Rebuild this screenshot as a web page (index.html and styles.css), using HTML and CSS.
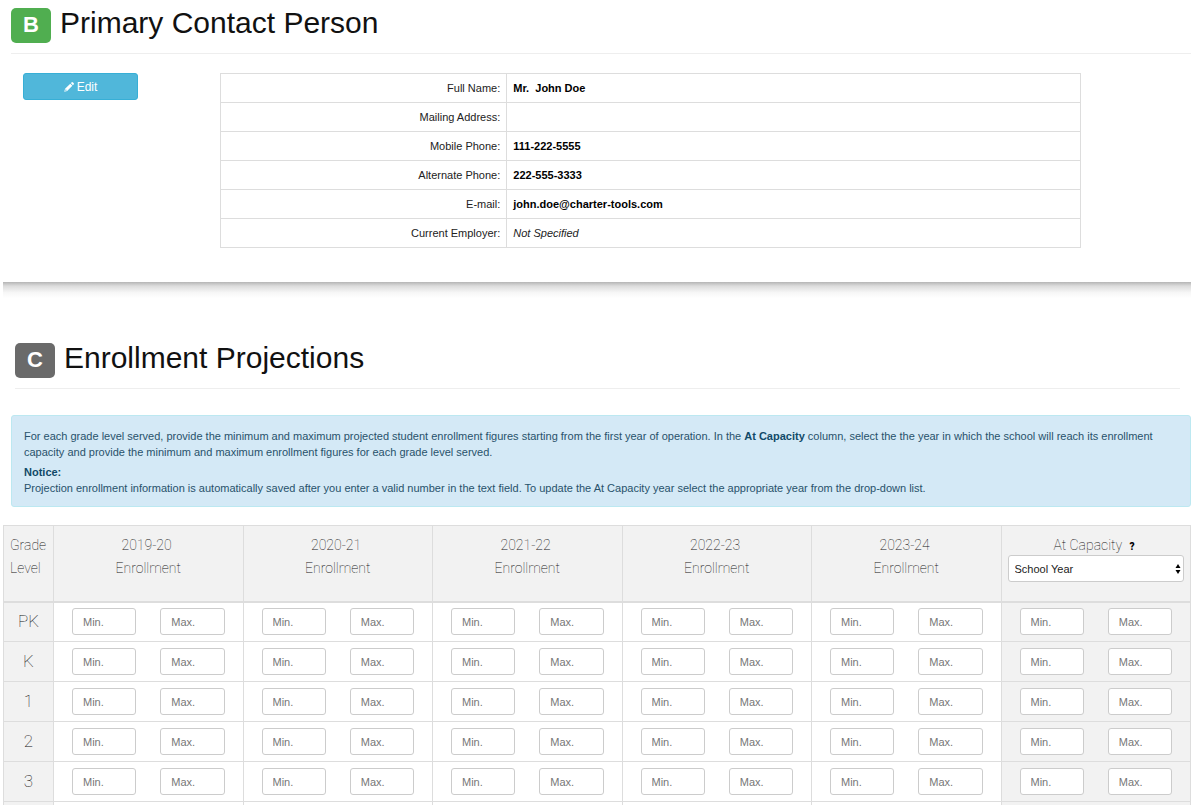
FILE: index.html
```
<!DOCTYPE html>
<html lang="en">
<head>
    <meta charset="UTF-8">
    <meta name="viewport" content="width=device-width, initial-scale=1.0">
    <title>Charter Application</title>
    <link rel="stylesheet" href="styles.css">
</head>
<body>
    <section class="contact">
        <h2 class="section-title"><span class="badge badge-done">B</span>Primary Contact Person</h2>
        <div class="contact-row">
            <div class="contact-actions">
                <button type="button" class="btn-edit">
                    <svg class="icon-pencil" viewBox="0 0 12 12" aria-hidden="true">
                        <path fill="currentColor" fill-rule="evenodd" d="M8.2 1.3 9 .5a1.3 1.3 0 0 1 1.8 0l.7.7a1.3 1.3 0 0 1 0 1.8l-.8.8zM7.5 2 10 4.5 3.8 10.7.3 11.7l1-3.5zM1.9 8.8l-.5 1.8 1.8-.5-.2-.9-.9-.2z"/>
                    </svg>
                    Edit
                </button>
            </div>
            <div class="contact-info">
                <table class="info-table">
                    <tr><th scope="row">Full Name:</th><td><b>Mr.&nbsp; John Doe</b></td></tr>
                    <tr><th scope="row">Mailing Address:</th><td></td></tr>
                    <tr><th scope="row">Mobile Phone:</th><td><b>111-222-5555</b></td></tr>
                    <tr><th scope="row">Alternate Phone:</th><td><b>222-555-3333</b></td></tr>
                    <tr><th scope="row">E-mail:</th><td><b>john.doe@charter-tools.com</b></td></tr>
                    <tr><th scope="row">Current Employer:</th><td><i>Not Specified</i></td></tr>
                </table>
            </div>
        </div>
    </section>

    <hr class="shadow-line">

    <section class="enrollment">
        <h2 class="section-title section-title-inset"><span class="badge">C</span>Enrollment Projections</h2>

        <div class="alert">
            <p>For each grade level served, provide the minimum and maximum projected student enrollment figures starting from the first year of operation. In the <b>At Capacity</b> column, select the the year in which the school will reach its enrollment capacity and provide the minimum and maximum enrollment figures for each grade level served.</p>
            <p><b>Notice:</b><br>Projection enrollment information is automatically saved after you enter a valid number in the text field. To update the At Capacity year select the appropriate year from the drop-down list.</p>
        </div>

        <table class="grades">
            <thead>
                <tr>
                    <th scope="col" class="grade-col">Grade Level</th>
                    <th scope="col">2019-20&nbsp;<br>Enrollment</th>
                    <th scope="col">2020-21&nbsp;<br>Enrollment</th>
                    <th scope="col">2021-22&nbsp;<br>Enrollment</th>
                    <th scope="col">2022-23&nbsp;<br>Enrollment</th>
                    <th scope="col">2023-24&nbsp;<br>Enrollment</th>
                    <th scope="col">
                        <label for="capacityYear">At Capacity</label> <span class="help">?</span>&nbsp;
                        <div class="select-wrap">
                            <select id="capacityYear">
                                <option>School Year</option>
                                <option>2019-20</option>
                                <option>2020-21</option>
                                <option>2021-22</option>
                                <option>2022-23</option>
                                <option>2023-24</option>
                            </select>
                            <svg class="icon-sort" viewBox="0 0 6 10" aria-hidden="true">
                                <path d="M3 0 5.5 4h-5zM3 10 .5 6h5z"/>
                            </svg>
                        </div>
                    </th>
                </tr>
            </thead>
            <tbody id="gradeRows"></tbody>
        </table>
    </section>

    <script>
        const grades = ['PK', 'K', '1', '2', '3', '4'];
        const years = ['2019-20', '2020-21', '2021-22', '2022-23', '2023-24', 'At Capacity'];

        // One row per grade, a min/max pair for each year
        document.getElementById('gradeRows').innerHTML = grades.map(function(grade) {
            const cells = years.map(function(year) {
                const name = grade + ' ' + year;
                return `<td><div class="range">
                    <input type="text" placeholder="Min." aria-label="${name} minimum">
                    <input type="text" placeholder="Max." aria-label="${name} maximum">
                </div></td>`;
            });
            return `<tr><th scope="row">${grade}</th>${cells.join('')}</tr>`;
        }).join('');
    </script>
</body>
</html>
```
FILE: styles.css
```
* {
    box-sizing: border-box;
}
body {
    margin: 0 9px 0 3px;
    font-family: "Liberation Sans", Arial, sans-serif;
    font-size: 11px;
    line-height: 16px;
    color: #222;
    background-color: #fff;
}
.contact {
    padding: 4px 0 34px 8px;
}
.section-title {
    display: flex;
    gap: 9px;
    margin: 0;
    padding-bottom: 10px;
    border-bottom: 1px solid #eee;
    font-size: 30px;
    font-weight: normal;
    line-height: 38px;
    color: #111;
}
.section-title-inset {
    margin: 0 11px 0 12px;
}
.badge {
    width: 40px;
    height: 35px;
    margin-top: 4px;
    border-radius: 5px;
    background-color: #6a6a6a;
    color: #fff;
    font-size: 22px;
    font-weight: bold;
    line-height: 34px;
    text-align: center;
}
.badge-done {
    background-color: #50ae50;
}
.contact-row {
    display: grid;
    grid-template-columns: repeat(12, 1fr);
    padding-top: 19px;
}
.contact-actions {
    grid-column: span 2;
    padding: 0 12px;
}
.contact-info {
    grid-column: span 9;
    padding: 0 12px;
}
.btn-edit {
    display: flex;
    align-items: center;
    justify-content: center;
    gap: 3px;
    width: 66.66%;
    height: 27px;
    border: 1px solid #37afd6;
    border-radius: 3px;
    background-color: #50b7da;
    color: #fff;
    font-family: inherit;
    font-size: 12px;
    cursor: pointer;
}
.icon-pencil {
    width: 10px;
    height: 10px;
}
table {
    width: 100%;
    border-collapse: collapse;
    table-layout: fixed;
}
th, td {
    border: 1px solid #ddd;
}
.info-table th, .info-table td {
    height: 29px;
    padding: 0 6px;
    text-align: left;
}
.info-table th {
    width: 33.33%;
    font-weight: normal;
    text-align: right;
}
.info-table b {
    color: #000;
}
.shadow-line {
    height: 16px;
    margin: 0 0 41px;
    border: 0;
    background: linear-gradient(#b5b5b5, #dcdcdc 25%, #f6f6f6 65%, #fff);
}
.alert {
    margin: 26px 0 18px 8px;
    padding: 12px 12px 6px;
    border: 1px solid #bce8f1;
    border-radius: 3px;
    background-color: #d4e9f6;
    color: #28526b;
}
.alert p {
    margin: 0 0 4px;
}
.alert b {
    color: #114a68;
}
.grades th {
    background-color: #f2f2f2;
    color: #111;
    font-family: Roboto, "Liberation Sans", sans-serif;
    font-weight: 100;
    text-align: center;
}
.grades thead th {
    height: 76px;
    padding: 8px 6px 0;
    border-bottom: 2px solid #ddd;
    font-size: 14px;
    line-height: 23px;
    vertical-align: top;
}
.grades .grade-col {
    width: 50px;
    text-align: left;
}
.grades tbody th {
    padding: 0 0 2px;
    font-size: 17px;
}
.grades td {
    height: 40px;
    padding: 0 18px;
}
.grades td:last-child {
    background-color: #f2f2f2;
}
.range {
    display: grid;
    grid-template-columns: 1fr 1fr;
    gap: 24px;
}
input, select {
    width: 100%;
    height: 27px;
    padding: 0 10px;
    border: 1px solid #ccc;
    border-radius: 3px;
    background-color: #fff;
    color: #222;
    font-family: "Liberation Sans", Arial, sans-serif;
    font-size: 11px;
}
input::placeholder {
    color: #777;
}
.help {
    margin-left: 4px;
    color: #000;
    font-size: 10px;
    font-weight: 900;
}
.select-wrap {
    position: relative;
    margin-top: -3px;
    line-height: 0;
}
select {
    padding: 0 6px;
    appearance: none;
}
.icon-sort {
    position: absolute;
    top: 9px;
    right: 3px;
    width: 6px;
    height: 10px;
}
```
